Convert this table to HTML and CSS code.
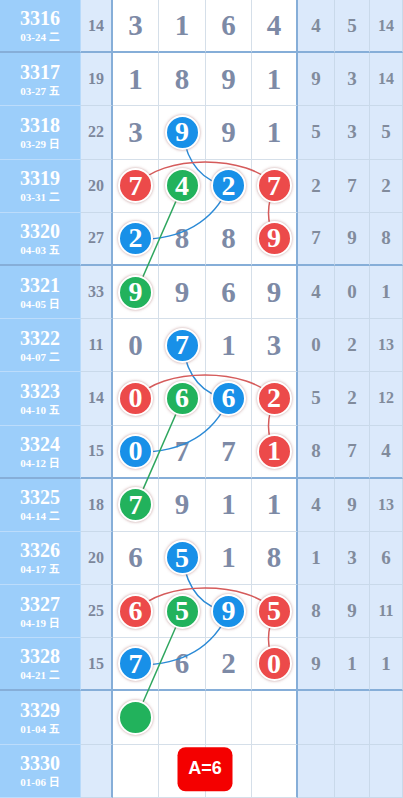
FILE: index.html
```html
<!DOCTYPE html>
<html lang="zh">
  <head>
    <meta charset="UTF-8" />
    <meta name="viewport" content="width=device-width, initial-scale=1.0" />
    <title>走势图</title>
    <link rel="stylesheet" href="styles.css">
  </head>
  <body>
    <div class="board">
      <!-- connecting lines, drawn under the balls -->
      <svg class="lines" width="403" height="798" viewBox="0 0 403 798">
        <g fill="none" stroke-width="1.5">
          <path class="ln-blue" d="M182.5,133 Q190,180 229,186.2" />
          <path class="ln-blue" d="M229,186.2 Q205,240 136,239.4" />
          <path class="ln-red" d="M136,186.2 C160,154 250,154 275,186.2" />
          <path class="ln-red" d="M275,186.2 Q262,213 275,239.4" />
          <path class="ln-green" d="M182.5,186.2 L136,292.6" />

          <path class="ln-blue" d="M182.5,345.8 Q190,393 229,399" />
          <path class="ln-blue" d="M229,399 Q205,453 136,452.2" />
          <path class="ln-red" d="M136,399 C160,367 250,367 275,399" />
          <path class="ln-red" d="M275,399 Q262,426 275,452.2" />
          <path class="ln-green" d="M182.5,399 L136,505.4" />

          <path class="ln-blue" d="M182.5,558.6 Q190,606 229,611.8" />
          <path class="ln-blue" d="M229,611.8 Q205,666 136,665" />
          <path class="ln-red" d="M136,611.8 C160,580 250,580 275,611.8" />
          <path class="ln-red" d="M275,611.8 Q262,639 275,665" />
          <path class="ln-green" d="M182.5,611.8 L136,718.2" />
        </g>
      </svg>

      <div class="row sep">
        <div class="issue"><b>3316</b><small>03-24 二</small></div>
        <div class="sum">14</div>
        <div class="num">3</div><div class="num">1</div><div class="num">6</div><div class="num last">4</div>
        <div class="side">4</div><div class="side">5</div><div class="side two">14</div>
      </div>
      <div class="row">
        <div class="issue"><b>3317</b><small>03-27 五</small></div>
        <div class="sum">19</div>
        <div class="num">1</div><div class="num">8</div><div class="num">9</div><div class="num last">1</div>
        <div class="side">9</div><div class="side">3</div><div class="side two">14</div>
      </div>
      <div class="row">
        <div class="issue"><b>3318</b><small>03-29 日</small></div>
        <div class="sum">22</div>
        <div class="num">3</div><div class="num"><span class="ball blue">9</span></div><div class="num">9</div><div class="num last">1</div>
        <div class="side">5</div><div class="side">3</div><div class="side">5</div>
      </div>
      <div class="row">
        <div class="issue"><b>3319</b><small>03-31 二</small></div>
        <div class="sum">20</div>
        <div class="num"><span class="ball red">7</span></div><div class="num"><span class="ball green">4</span></div><div class="num"><span class="ball blue">2</span></div><div class="num last"><span class="ball red">7</span></div>
        <div class="side">2</div><div class="side">7</div><div class="side">2</div>
      </div>
      <div class="row sep">
        <div class="issue"><b>3320</b><small>04-03 五</small></div>
        <div class="sum">27</div>
        <div class="num"><span class="ball blue">2</span></div><div class="num">8</div><div class="num">8</div><div class="num last"><span class="ball red">9</span></div>
        <div class="side">7</div><div class="side">9</div><div class="side">8</div>
      </div>
      <div class="row">
        <div class="issue"><b>3321</b><small>04-05 日</small></div>
        <div class="sum">33</div>
        <div class="num"><span class="ball green">9</span></div><div class="num">9</div><div class="num">6</div><div class="num last">9</div>
        <div class="side">4</div><div class="side">0</div><div class="side">1</div>
      </div>
      <div class="row">
        <div class="issue"><b>3322</b><small>04-07 二</small></div>
        <div class="sum">11</div>
        <div class="num">0</div><div class="num"><span class="ball blue">7</span></div><div class="num">1</div><div class="num last">3</div>
        <div class="side">0</div><div class="side">2</div><div class="side two">13</div>
      </div>
      <div class="row">
        <div class="issue"><b>3323</b><small>04-10 五</small></div>
        <div class="sum">14</div>
        <div class="num"><span class="ball red">0</span></div><div class="num"><span class="ball green">6</span></div><div class="num"><span class="ball blue">6</span></div><div class="num last"><span class="ball red">2</span></div>
        <div class="side">5</div><div class="side">2</div><div class="side two">12</div>
      </div>
      <div class="row sep">
        <div class="issue"><b>3324</b><small>04-12 日</small></div>
        <div class="sum">15</div>
        <div class="num"><span class="ball blue">0</span></div><div class="num">7</div><div class="num">7</div><div class="num last"><span class="ball red">1</span></div>
        <div class="side">8</div><div class="side">7</div><div class="side">4</div>
      </div>
      <div class="row">
        <div class="issue"><b>3325</b><small>04-14 二</small></div>
        <div class="sum">18</div>
        <div class="num"><span class="ball green">7</span></div><div class="num">9</div><div class="num">1</div><div class="num last">1</div>
        <div class="side">4</div><div class="side">9</div><div class="side two">13</div>
      </div>
      <div class="row">
        <div class="issue"><b>3326</b><small>04-17 五</small></div>
        <div class="sum">20</div>
        <div class="num">6</div><div class="num"><span class="ball blue">5</span></div><div class="num">1</div><div class="num last">8</div>
        <div class="side">1</div><div class="side">3</div><div class="side">6</div>
      </div>
      <div class="row">
        <div class="issue"><b>3327</b><small>04-19 日</small></div>
        <div class="sum">25</div>
        <div class="num"><span class="ball red">6</span></div><div class="num"><span class="ball green">5</span></div><div class="num"><span class="ball blue">9</span></div><div class="num last"><span class="ball red">5</span></div>
        <div class="side">8</div><div class="side">9</div><div class="side two">11</div>
      </div>
      <div class="row sep">
        <div class="issue"><b>3328</b><small>04-21 二</small></div>
        <div class="sum">15</div>
        <div class="num"><span class="ball blue">7</span></div><div class="num">6</div><div class="num">2</div><div class="num last"><span class="ball red">0</span></div>
        <div class="side">9</div><div class="side">1</div><div class="side">1</div>
      </div>
      <div class="row">
        <div class="issue"><b>3329</b><small>01-04 五</small></div>
        <div class="sum"></div>
        <div class="num"><span class="ball green"></span></div><div class="num"></div><div class="num"></div><div class="num last"></div>
        <div class="side"></div><div class="side"></div><div class="side"></div>
      </div>
      <div class="row">
        <div class="issue"><b>3330</b><small>01-06 日</small></div>
        <div class="sum"></div>
        <div class="num"></div><div class="num badge-cell"><span class="badge">A=6</span></div><div class="num"></div><div class="num last"></div>
        <div class="side"></div><div class="side"></div><div class="side"></div>
      </div>
    </div>
  </body>
</html>
```

FILE: styles.css
```css
body {
  margin: 0;
  background: #fff;
  font-family: "Liberation Serif", "Noto Sans CJK SC", serif;
}
.board {
  position: relative;
  width: 403px;
  height: 798px;
  display: grid;
  grid-template-columns: 81px 32px 46px 47px 46px 46px 37px 35px 33px;
  grid-template-rows: repeat(15, 53.2px);
  overflow: hidden;
}
.row {
  display: contents;
}
.row > div {
  box-sizing: border-box;
  display: flex;
  align-items: center;
  justify-content: center;
  border-right: 1px solid #c9d9ea;
  border-bottom: 1px solid #c9d9ea;
  font-weight: bold;
}
.row.sep > div {
  border-bottom: 2px solid #86aed8;
}
.issue {
  flex-direction: column;
  background: #9ccefa;
  color: #fff;
  line-height: 1;
}
.row > .issue {
  border-right-color: #b8dafa;
  border-bottom-color: #bcdcfb;
}
.issue b {
  font-size: 20px;
}
.issue small {
  font-size: 11px;
  margin-top: 4px;
}
.sum {
  background: #dceafb;
  color: #7c879b;
  font-size: 16px;
}
.row > .sum {
  border-right: 2px solid #86aed8;
}
.num {
  background: #fff;
  color: #7d8aa6;
  font-size: 29px;
}
.row > .num {
  border-right-color: #d5dfe9;
  border-bottom-color: #d5dfe9;
}
.row > .num.last {
  border-right: 2px solid #86aed8;
}
.side {
  background: #dbe9fb;
  color: #818b9c;
  font-size: 19px;
}
.side.two {
  font-size: 16px;
}
.lines {
  position: absolute;
  top: 0;
  left: 0;
  z-index: 1;
  pointer-events: none;
}
.ln-blue {
  stroke: #2b8ad6;
}
.ln-red {
  stroke: #d55b5b;
}
.ln-green {
  stroke: #2ea65e;
}
.ball {
  position: relative;
  z-index: 2;
  box-sizing: border-box;
  width: 35px;
  height: 35px;
  border: 2px solid #fff;
  border-radius: 50%;
  box-shadow: 0 0 3px rgba(150, 80, 80, 0.55);
  display: flex;
  align-items: center;
  justify-content: center;
  color: #fff;
  font-size: 28px;
  line-height: 1;
}
.ball.red {
  background: #ec4a4a;
}
.ball.green {
  background: #22b25c;
}
.ball.blue {
  background: #1890e8;
}
.badge-cell {
  position: relative;
}
.badge {
  position: absolute;
  z-index: 2;
  left: 100%;
  top: 50%;
  transform: translate(-50%, -54%);
  width: 55px;
  height: 44px;
  border-radius: 8px;
  background: #f40000;
  color: #fff;
  font-family: "Liberation Sans", Arial, sans-serif;
  font-size: 18px;
  font-weight: bold;
  display: flex;
  align-items: center;
  justify-content: center;
}
```
